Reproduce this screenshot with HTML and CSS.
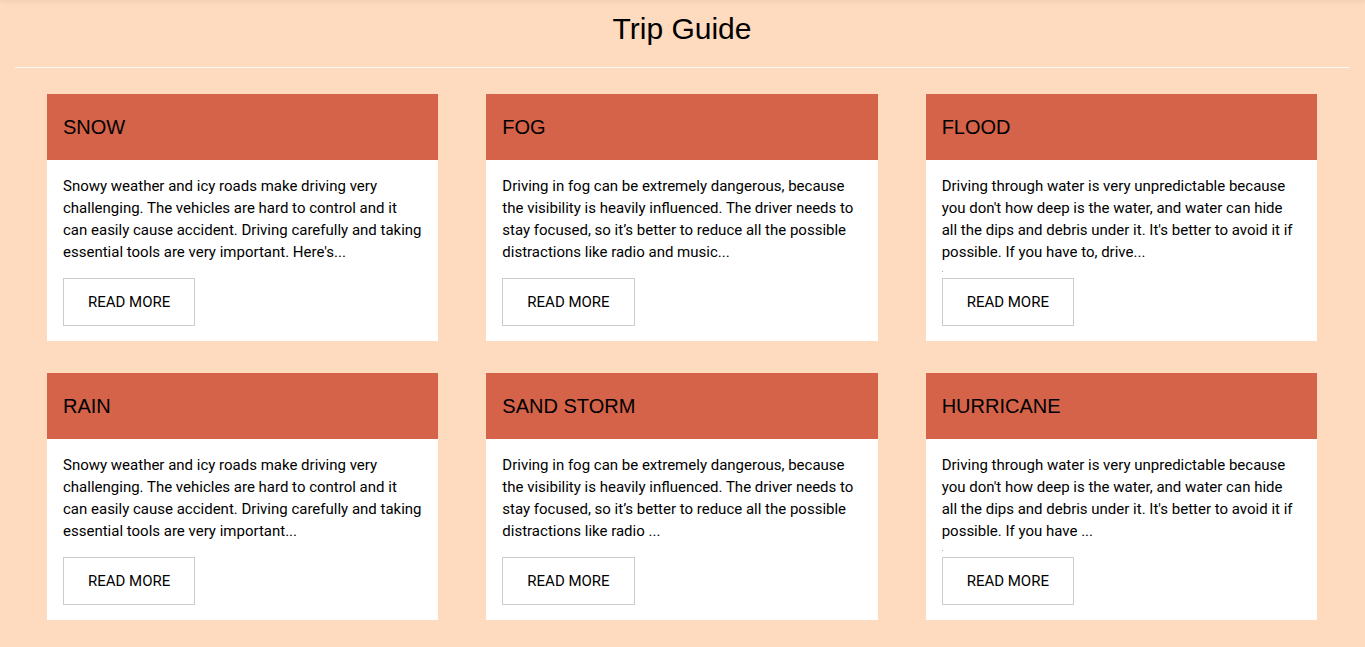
FILE: index.html
```html
<!DOCTYPE html>
<html lang="en">
<head>
<meta charset="utf-8">
<title>Trip Guide</title>
<link rel="stylesheet" href="styles.css">
</head>
<body>
<header class="topbar"></header>
<main class="page">
  <h1 class="title">Trip Guide</h1>
  <section class="cards">
    <article class="card">
      <h2 class="card-title">SNOW</h2>
      <div class="card-body">
        <p class="card-text">Snowy weather and icy roads make driving very challenging. The vehicles are hard to control and it can easily cause accident. Driving carefully and taking essential tools are very important. Here's...</p>
        <button class="more" type="button">READ MORE</button>
      </div>
    </article>
    <article class="card">
      <h2 class="card-title">FOG</h2>
      <div class="card-body">
        <p class="card-text">Driving in fog can be extremely dangerous, because the visibility is heavily influenced. The driver needs to stay focused, so it’s better to reduce all the possible distractions like radio and music...</p>
        <button class="more" type="button">READ MORE</button>
      </div>
    </article>
    <article class="card">
      <h2 class="card-title">FLOOD</h2>
      <div class="card-body">
        <p class="card-text dotted">Driving through water is very unpredictable because you don't how deep is the water, and water can hide all the dips and debris under it. It's better to avoid it if possible. If you have to, drive...</p>
        <button class="more" type="button">READ MORE</button>
      </div>
    </article>
    <article class="card">
      <h2 class="card-title">RAIN</h2>
      <div class="card-body">
        <p class="card-text">Snowy weather and icy roads make driving very challenging. The vehicles are hard to control and it can easily cause accident. Driving carefully and taking essential tools are very important...</p>
        <button class="more" type="button">READ MORE</button>
      </div>
    </article>
    <article class="card">
      <h2 class="card-title">SAND STORM</h2>
      <div class="card-body">
        <p class="card-text">Driving in fog can be extremely dangerous, because the visibility is heavily influenced. The driver needs to stay focused, so it’s better to reduce all the possible distractions like radio ...</p>
        <button class="more" type="button">READ MORE</button>
      </div>
    </article>
    <article class="card">
      <h2 class="card-title">HURRICANE</h2>
      <div class="card-body">
        <p class="card-text dotted">Driving through water is very unpredictable because you don't how deep is the water, and water can hide all the dips and debris under it. It's better to avoid it if possible. If you have ...</p>
        <button class="more" type="button">READ MORE</button>
      </div>
    </article>
  </section>
</main>
</body>
</html>
```
FILE: styles.css
```css
* { box-sizing: border-box; }

body {
  margin: 0;
  background: #fedabe;
  color: #000;
  font-family: Roboto, sans-serif;
  font-size: 15px;
  line-height: 22px;
}

.topbar {
  height: 0;
  box-shadow: 0 0 5px 1px rgba(0, 0, 0, 0.12);
}

.page { padding: 0 16px 27px 15px; }

.title {
  margin: 0;
  padding: 6px 0 16px;
  border-bottom: 1px solid #fff8f2;
  font: 400 30px/45px "Liberation Sans", Arial, sans-serif;
  text-align: center;
}

.cards {
  display: grid;
  grid-template-columns: repeat(3, 1fr);
  gap: 32px 48px;
  padding: 26px 32px 0;
}

.card { background: #fff; }

.card-title {
  margin: 0;
  padding: 18px 16px;
  background: #d4634a;
  font: 400 20px/30px "Liberation Sans", Arial, sans-serif;
}

.card-body { padding: 15px 16px; }

.card-text { margin: 0 0 15px; }

/* small mark between the text and the button */
.dotted { margin-bottom: 6px; }

.dotted::after {
  content: "";
  display: block;
  width: 1px;
  height: 1px;
  margin-top: 8px;
  background: #aaa;
}

.more {
  display: block;
  height: 48px;
  padding: 0 24px;
  border: 1px solid #ccc;
  background: #fff;
  color: #000;
  font: 400 15px/22px Roboto, sans-serif;
}
```
